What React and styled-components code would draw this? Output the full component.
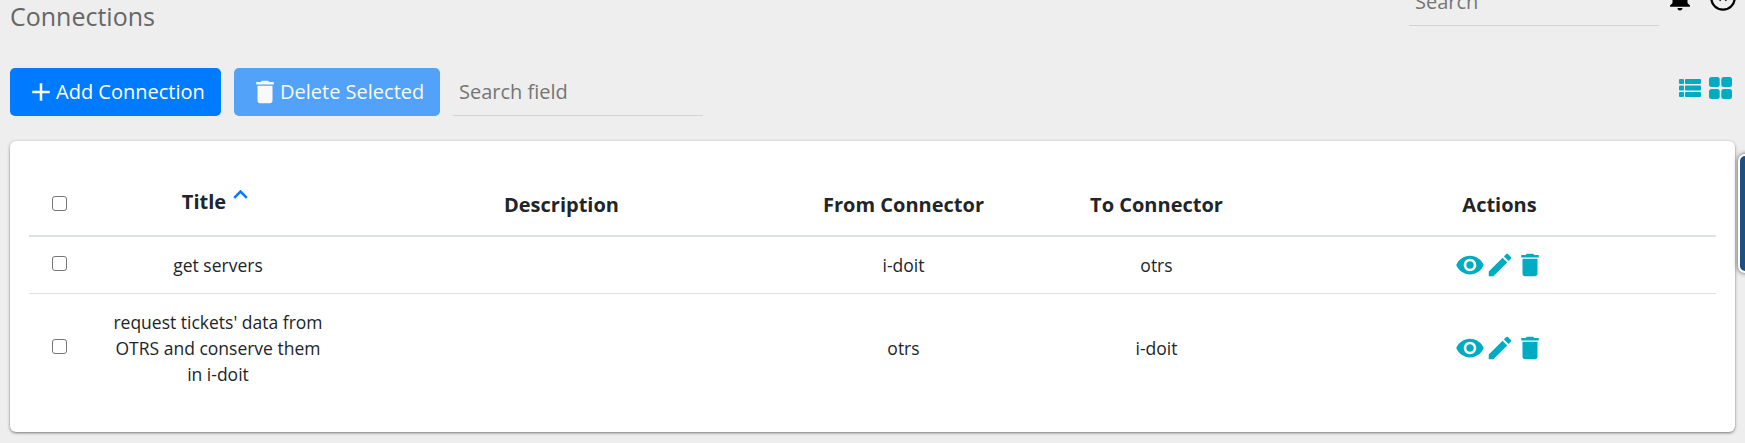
import React from "react";
import styled, { createGlobalStyle } from "styled-components";
import {
  MdAdd,
  MdDelete,
  MdEdit,
  MdNotifications,
  MdVisibility,
} from "react-icons/md";

const teal = "#00acc2";

const GlobalStyle = createGlobalStyle`
  *, *::before, *::after { box-sizing: border-box; }
  body {
    margin: 0;
    background: #eeeeee;
    color: #212529;
    font-family: "Open Sans", sans-serif;
    overflow: hidden;
  }
`;

const Page = styled.div`
  position: relative;
  height: 443px;
  overflow: hidden;
  padding: 0 10px;
`;

const Header = styled.header`
  display: flex;
  justify-content: space-between;
  height: 26px;
`;

const Heading = styled.h1`
  margin: 0;
  font-size: 25px;
  font-weight: 400;
  line-height: 32px;
  color: #666;
`;

const HeaderTools = styled.div`
  display: flex;
  align-items: flex-end;
  height: 26px;
  margin-right: -1px;
`;

const TextField = styled.input`
  width: 250px;
  height: 48px;
  border: 0;
  border-bottom: 1px solid #d3d3d3;
  border-radius: 0;
  padding: 0 6px;
  background: transparent;
  font: 400 20px "Open Sans", sans-serif;
  color: #212529;
  outline: none;
  &::placeholder { color: #757575; opacity: 1; }
`;

const HeaderIcon = styled.span`
  display: flex;
  width: ${(p) => p.$size}px;
  height: ${(p) => p.$size}px;
  margin: 0 0 ${(p) => p.$bottom}px ${(p) => p.$left}px;
  color: #000;
  svg { width: 100%; height: 100%; }
`;

const Toolbar = styled.div`
  display: flex;
  align-items: flex-start;
  gap: 13px;
  margin-top: 42px;
  height: 48px;
`;

const Button = styled.button`
  display: flex;
  align-items: center;
  width: ${(p) => p.$width}px;
  height: 48px;
  border: 0;
  border-radius: 5px;
  padding: 0 0 1px ${(p) => p.$inset}px;
  background: #007bff;
  color: #fff;
  font: 400 20px "Open Sans", sans-serif;
  white-space: nowrap;
  opacity: ${(p) => (p.disabled ? 0.65 : 1)};
  svg {
    flex: none;
    width: ${(p) => p.$icon}px;
    height: ${(p) => p.$icon}px;
    margin-top: 1px;
  }
`;

const ViewSwitch = styled.div`
  display: flex;
  align-items: center;
  gap: 8px;
  margin: 8px 3px 0 auto;
  height: 24px;
  color: ${teal};
`;

const Card = styled.main`
  height: 291px;
  margin-top: 25px;
  padding: 32px 19px 0;
  border-radius: 6px;
  background: #fff;
  box-shadow: 0 1px 3px rgba(0, 0, 0, 0.5);
`;

const Row = styled.div`
  display: grid;
  grid-template-columns: 61px 256px 431px 253px 253px 431px;
  align-items: center;
  height: ${(p) => p.$height}px;
  border-bottom: ${(p) => p.$line || 0}px solid #dee2e6;
`;

const Cell = styled.div`
  display: flex;
  align-items: center;
  justify-content: center;
  padding: 0 20px;
  text-align: center;
  font-size: 17.5px;
  line-height: 26px;
`;

const HeadCell = styled(Cell)`
  padding-top: 2px;
  font-size: 20px;
  font-weight: 700;
`;

const SortCell = styled(HeadCell)`
  gap: 7px;
  padding: 0 26px 4px 20px;
  svg { margin-top: -15px; color: #007bff; }
`;

const CheckCell = styled.div`
  display: flex;
  justify-content: center;
  padding-bottom: ${(p) => p.$lift}px;
`;

const Checkbox = styled.input.attrs({ type: "checkbox" })`
  appearance: none;
  width: 15px;
  height: 15px;
  margin: 0;
  border: 1px solid #767676;
  border-radius: 3px;
  background: #fff;
`;

const ActionsHead = styled(HeadCell)`
  padding-left: 21px;
  padding-right: 19px;
`;

const Actions = styled(Cell)`
  padding: 0 19px 0 21px;
  color: ${teal};
  svg { width: 30px; height: 30px; }
`;

const SideTab = styled.aside`
  position: absolute;
  top: 154px;
  right: -30px;
  width: 37px;
  height: 119px;
  border: 2px solid #fff;
  border-radius: 7px;
  background: #1c5083;
  box-shadow: 0 0 5px rgba(0, 0, 0, 0.65);
`;

const SortIcon = () => (
  <svg width="15" height="9" viewBox="0 0 15 9" fill="none" stroke="currentColor">
    <path d="M1.2 7.8l6.3-6.3 6.3 6.3" strokeWidth="2.5" />
  </svg>
);

const ListIcon = () => (
  <svg width="22" height="18" viewBox="0 0 22 18" fill="currentColor">
    {[0, 6.5, 13].map((y) => (
      <g key={y}>
        <rect x="0" y={y} width="5" height="5" rx="1" />
        <rect x="6" y={y} width="16" height="5" rx="1" />
      </g>
    ))}
  </svg>
);

const GridIcon = () => (
  <svg width="23" height="22" viewBox="0 0 23 22" fill="currentColor">
    {[0, 12.3].map((x) =>
      [0, 12].map((y) => (
        <rect key={`${x}-${y}`} x={x} y={y} width="10.7" height="10" rx="2.5" />
      ))
    )}
  </svg>
);

const CloseCircleIcon = () => (
  <svg viewBox="0 0 26 26" fill="none" stroke="currentColor">
    <circle cx="13" cy="13" r="11.7" strokeWidth="2.3" />
    <path d="M9 8l7.5 7.5M17 8l-7.5 7.5" strokeWidth="1.8" />
  </svg>
);

const connections = [
  { title: "get servers", from: "i-doit", to: "otrs", height: 57, line: 1 },
  {
    title: "request tickets' data from OTRS and conserve them in i-doit",
    from: "otrs",
    to: "i-doit",
    height: 108,
    line: 0,
  },
];

export default function App() {
  return (
    <>
      <GlobalStyle />
      <Page>
        <Header>
          <Heading>Connections</Heading>
          <HeaderTools>
            <TextField placeholder="Search" />
            <HeaderIcon $size={30} $left={6} $bottom={13}>
              <MdNotifications />
            </HeaderIcon>
            <HeaderIcon $size={26} $left={15} $bottom={15}>
              <CloseCircleIcon />
            </HeaderIcon>
          </HeaderTools>
        </Header>
        <Toolbar>
          <Button $width={211} $inset={16} $icon={30}>
            <MdAdd />
            Add Connection
          </Button>
          <Button $width={206} $inset={16} $icon={30} disabled>
            <MdDelete />
            Delete Selected
          </Button>
          <TextField placeholder="Search field" />
          <ViewSwitch>
            <ListIcon />
            <GridIcon />
          </ViewSwitch>
        </Toolbar>
        <Card>
          <Row $height={64} $line={2}>
            <CheckCell $lift={2}>
              <Checkbox />
            </CheckCell>
            <SortCell>
              Title
              <SortIcon />
            </SortCell>
            <HeadCell>Description</HeadCell>
            <HeadCell>From Connector</HeadCell>
            <HeadCell>To Connector</HeadCell>
            <ActionsHead>Actions</ActionsHead>
          </Row>
          {connections.map((c) => (
            <Row key={c.title} $height={c.height} $line={c.line}>
              <CheckCell $lift={3}>
                <Checkbox />
              </CheckCell>
              <Cell>{c.title}</Cell>
              <Cell />
              <Cell>{c.from}</Cell>
              <Cell>{c.to}</Cell>
              <Actions>
                <MdVisibility />
                <MdEdit />
                <MdDelete />
              </Actions>
            </Row>
          ))}
        </Card>
        <SideTab />
      </Page>
    </>
  );
}
